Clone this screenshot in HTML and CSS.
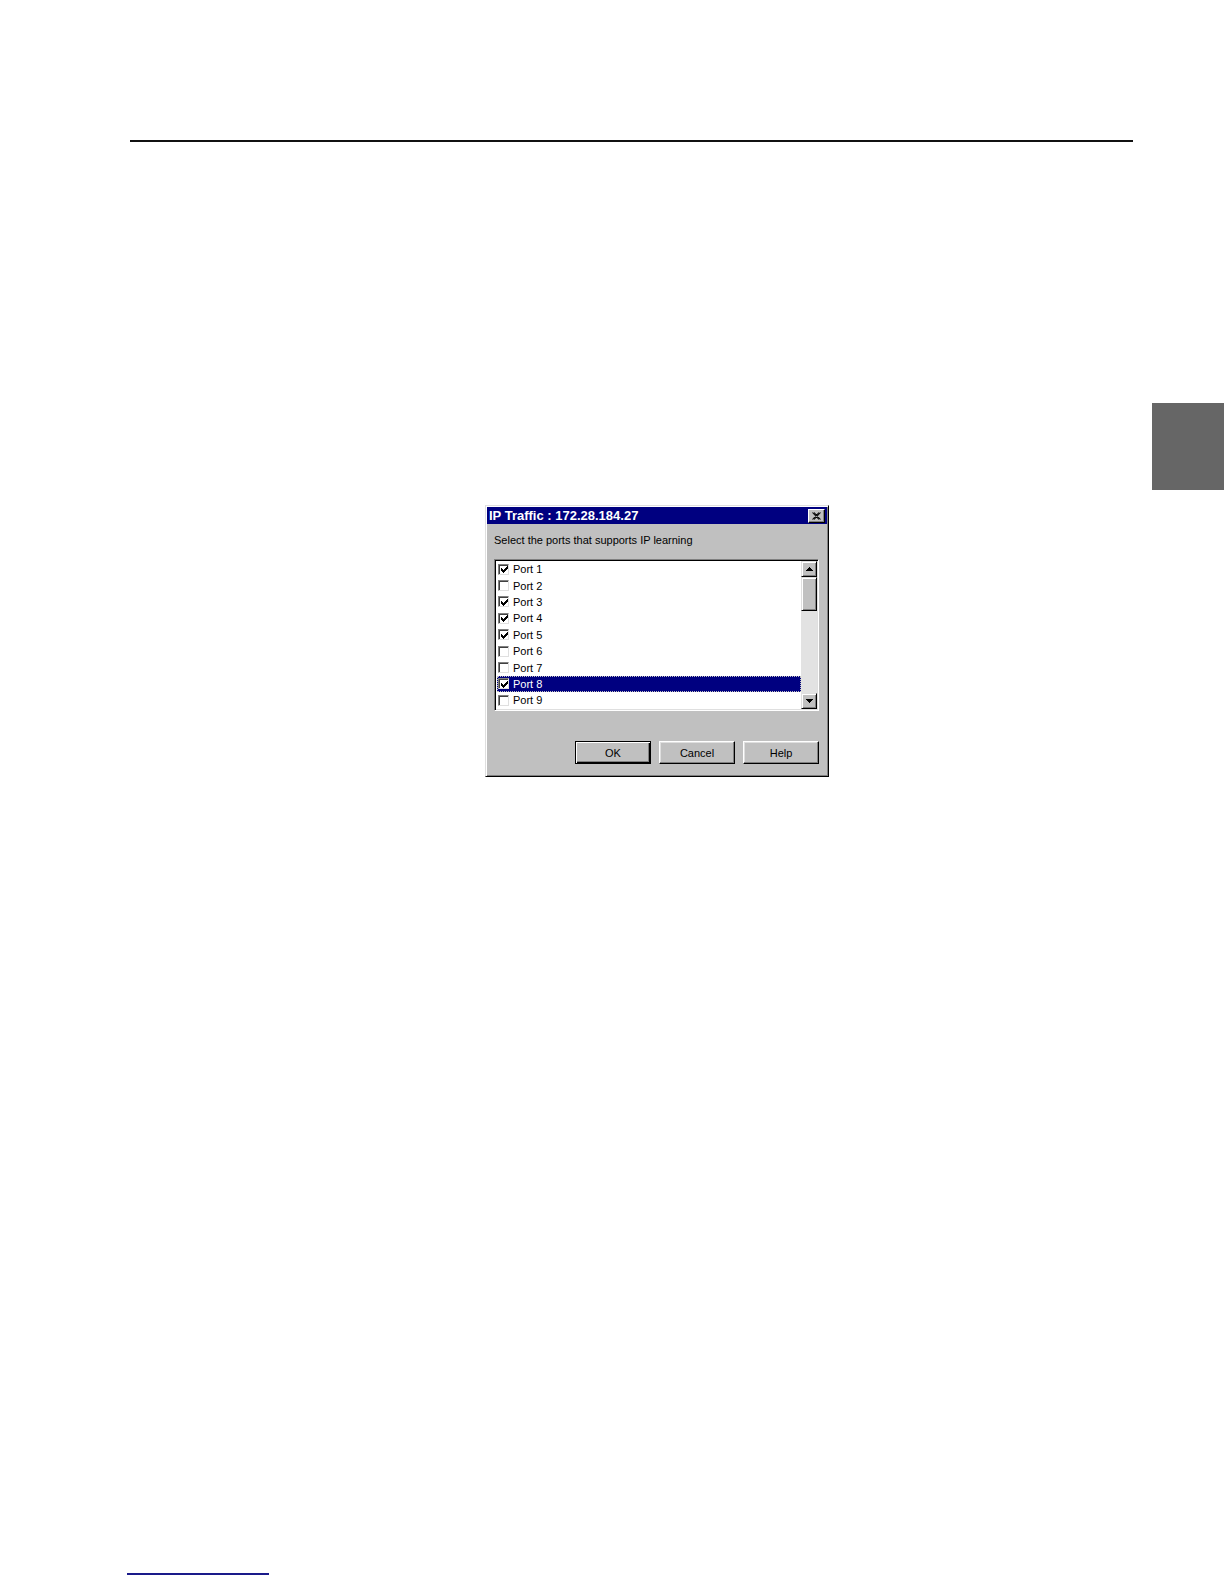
FILE: index.html
```html
<!DOCTYPE html>
<html>
<head>
<meta charset="utf-8">
<link rel="stylesheet" href="styles.css">
</head>
<body>
<div class="page">
  <div class="rule"></div>
  <div class="tab-row"><div class="tab"></div></div>
  <div class="dialog">
    <div class="titlebar">
      <span class="title">IP Traffic : 172.28.184.27</span>
      <span class="close"><svg width="9" height="8" viewBox="0 0 9 8"><path d="M0.5 0.5 L7 7.5 M2 0.5 L8.5 7.5 M7 0.5 L0.5 7.5 M8.5 0.5 L2 7.5" stroke="#000" stroke-width="1.1" fill="none"/></svg></span>
    </div>
    <div class="body">
      <div class="label">Select the ports that supports IP learning</div>
      <div class="listbox">
        <div class="items">
          <div class="item"><span class="cb"><svg class="ck" width="7" height="7" viewBox="0 0 7 7"><path d="M6 0h1v1h-1zM5 1h2v1h-2zM0 2h1v1h-1zM4 2h3v1h-3zM0 3h2v1h-2zM3 3h3v1h-3zM0 4h5v1h-5zM1 5h3v1h-3zM2 6h1v1h-1z" fill="#000"/></svg></span><span class="txt">Port 1</span></div>
          <div class="item"><span class="cb"></span><span class="txt">Port 2</span></div>
          <div class="item"><span class="cb"><svg class="ck" width="7" height="7" viewBox="0 0 7 7"><path d="M6 0h1v1h-1zM5 1h2v1h-2zM0 2h1v1h-1zM4 2h3v1h-3zM0 3h2v1h-2zM3 3h3v1h-3zM0 4h5v1h-5zM1 5h3v1h-3zM2 6h1v1h-1z" fill="#000"/></svg></span><span class="txt">Port 3</span></div>
          <div class="item"><span class="cb"><svg class="ck" width="7" height="7" viewBox="0 0 7 7"><path d="M6 0h1v1h-1zM5 1h2v1h-2zM0 2h1v1h-1zM4 2h3v1h-3zM0 3h2v1h-2zM3 3h3v1h-3zM0 4h5v1h-5zM1 5h3v1h-3zM2 6h1v1h-1z" fill="#000"/></svg></span><span class="txt">Port 4</span></div>
          <div class="item"><span class="cb"><svg class="ck" width="7" height="7" viewBox="0 0 7 7"><path d="M6 0h1v1h-1zM5 1h2v1h-2zM0 2h1v1h-1zM4 2h3v1h-3zM0 3h2v1h-2zM3 3h3v1h-3zM0 4h5v1h-5zM1 5h3v1h-3zM2 6h1v1h-1z" fill="#000"/></svg></span><span class="txt">Port 5</span></div>
          <div class="item"><span class="cb"></span><span class="txt">Port 6</span></div>
          <div class="item"><span class="cb"></span><span class="txt">Port 7</span></div>
          <div class="item selected"><span class="cb"><svg class="ck" width="7" height="7" viewBox="0 0 7 7"><path d="M6 0h1v1h-1zM5 1h2v1h-2zM0 2h1v1h-1zM4 2h3v1h-3zM0 3h2v1h-2zM3 3h3v1h-3zM0 4h5v1h-5zM1 5h3v1h-3zM2 6h1v1h-1z" fill="#000"/></svg></span><span class="txt">Port 8</span></div>
          <div class="item"><span class="cb"></span><span class="txt">Port 9</span></div>
        </div>
        <div class="scrollbar">
          <div class="sbtn"><svg width="7" height="4" viewBox="0 0 7 4"><path d="M3 0h1v1h-1zM2 1h3v1h-3zM1 2h5v1h-5zM0 3h7v1h-7z" fill="#000"/></svg></div>
          <div class="thumb"></div>
          <div class="track"></div>
          <div class="sbtn"><svg width="7" height="4" viewBox="0 0 7 4"><path d="M0 0h7v1h-7zM1 1h5v1h-5zM2 2h3v1h-3zM3 3h1v1h-1z" fill="#000"/></svg></div>
        </div>
      </div>
      <div class="buttons">
        <div class="btn default"><span>OK</span></div>
        <div class="btn"><span>Cancel</span></div>
        <div class="btn"><span>Help</span></div>
      </div>
    </div>
  </div>
  <div class="footline"></div>
</div>
</body>
</html>
```

FILE: styles.css
```css
html, body {
  margin: 0;
  padding: 0;
  background: #fff;
}
.page {
  width: 1224px;
  height: 1584px;
  overflow: hidden;
  font-family: "Liberation Sans", Arial, sans-serif;
}
.rule {
  margin: 140px 0 0 130px;
  width: 1003px;
  height: 2px;
  background: #111;
}
.tab-row {
  display: flex;
  justify-content: flex-end;
  margin-top: 261px;
}
.tab {
  width: 72px;
  height: 87px;
  background: #666666;
}
.dialog {
  margin: 15px 0 0 485px;
  width: 344px;
  height: 272px;
  box-sizing: border-box;
  background: #c0c0c0;
  border: 1px solid;
  border-color: #dfdfdf #000 #000 #dfdfdf;
  box-shadow: inset 1px 1px #fff, inset -1px -1px #808080;
  padding: 1px;
}
.titlebar {
  height: 17px;
  background: #000080;
  display: flex;
  align-items: center;
  justify-content: space-between;
  padding: 0 2px 0 2px;
}
.title {
  color: #fff;
  font-weight: bold;
  font-size: 13px;
  line-height: 17px;
}
.close {
  width: 17px;
  height: 14px;
  box-sizing: border-box;
  background: #c0c0c0;
  border: 1px solid;
  border-color: #fff #000 #000 #fff;
  box-shadow: inset -1px -1px #808080;
  display: flex;
  align-items: center;
  justify-content: center;
}
.body {
  padding: 0 8px 0 7px;
}
.label {
  margin-top: 9px;
  font-size: 11px;
  line-height: 14px;
  color: #000;
}
.listbox {
  margin-top: 12px;
  height: 152px;
  box-sizing: border-box;
  border: 1px solid;
  border-color: #808080 #fff #fff #808080;
  box-shadow: inset 1px 1px #000, inset -1px -1px #dfdfdf;
  padding: 1px;
  background: #fff;
  display: flex;
}
.items {
  flex: 1;
  padding-left: 1px;
}
.item {
  height: 16.4px;
  display: flex;
  align-items: center;
  font-size: 11px;
  color: #000;
  box-sizing: border-box;
  padding-left: 1px;
}
.item.selected {
  background: #000080;
  color: #fff;
  outline: 1px dotted #c0c0c0;
  outline-offset: -1px;
}
.cb {
  width: 11px;
  height: 11px;
  box-sizing: border-box;
  background: #fff;
  border: 1px solid;
  border-color: #808080 #dfdfdf #dfdfdf #808080;
  box-shadow: inset 1px 1px #404040;
  display: flex;
  align-items: center;
  justify-content: center;
  padding: 1px 0 0 1px;
  flex: none;
}
.ck {
  display: block;
}
.txt {
  margin-left: 4px;
  line-height: 14px;
}
.scrollbar {
  width: 16px;
  display: flex;
  flex-direction: column;
  flex: none;
}
.sbtn, .thumb {
  box-sizing: border-box;
  background: #c0c0c0;
  border: 1px solid;
  border-color: #dfdfdf #000 #000 #dfdfdf;
  box-shadow: inset 1px 1px #fff, inset -1px -1px #808080;
}
.sbtn {
  height: 16px;
  display: flex;
  align-items: center;
  justify-content: center;
  flex: none;
}
.thumb {
  height: 34px;
  flex: none;
}
.track {
  flex: 1;
  background: #e2e2e2;
}
.buttons {
  margin-top: 30px;
  display: flex;
  justify-content: flex-end;
  gap: 8px;
}
.btn {
  width: 76px;
  height: 23px;
  box-sizing: border-box;
  background: #c0c0c0;
  border: 1px solid;
  border-color: #fff #000 #000 #fff;
  box-shadow: inset -1px -1px #808080, inset 1px 1px #dfdfdf;
  display: flex;
  align-items: center;
  justify-content: center;
  font-size: 11px;
  color: #000;
}
.btn.default {
  border: 1px solid #000;
  box-shadow: inset 1px 1px #fff, inset -1px -1px #000, inset -2px -2px #808080;
}
.footline {
  margin: 796px 0 0 127px;
  width: 142px;
  height: 2px;
  background: #1a1a8a;
}
```
